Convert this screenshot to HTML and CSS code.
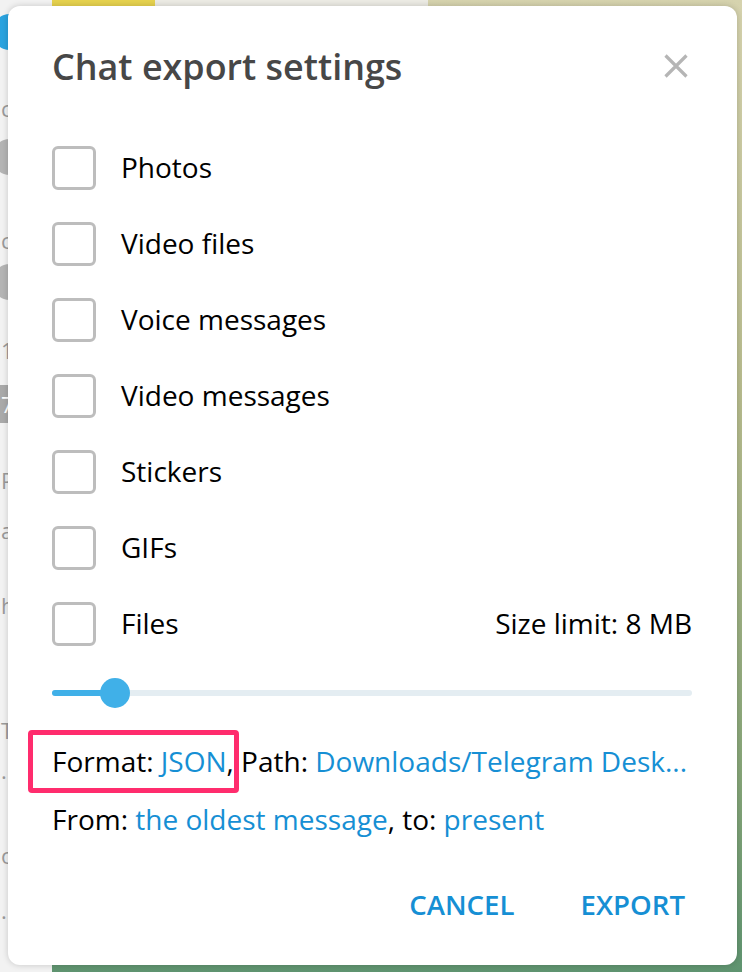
FILE: index.html
```html
<!DOCTYPE html>
<html>
<head>
<meta charset="utf-8">
<link rel="stylesheet" href="styles.css">
</head>
<body>
<div class="app">
  <aside class="sidebar">
    <span class="avatar blue"></span>
    <span class="frag">c</span>
    <span class="avatar grey"></span>
    <span class="frag">c</span>
    <span class="avatar grey"></span>
    <span class="frag">1</span>
    <span class="badge">7</span>
    <span class="frag">P</span>
    <span class="frag">a</span>
    <span class="frag">h</span>
    <span class="frag">Tu</span>
    <span class="frag">.</span>
    <span class="frag">o</span>
    <span class="frag">.</span>
  </aside>
  <main class="chat"></main>
</div>

<div class="dialog">
  <div class="dialog-header">
    <h1 class="title">Chat export settings</h1>
    <button class="close" aria-label="Close">
      <svg width="24" height="24" viewBox="0 0 24 24"><path d="M1.5 1.5 L22.5 22.5 M22.5 1.5 L1.5 22.5" stroke="#b5b5b5" stroke-width="3.2" fill="none"/></svg>
    </button>
  </div>

  <ul class="options">
    <li class="option"><span class="checkbox"></span><span class="label">Photos</span></li>
    <li class="option"><span class="checkbox"></span><span class="label">Video files</span></li>
    <li class="option"><span class="checkbox"></span><span class="label">Voice messages</span></li>
    <li class="option"><span class="checkbox"></span><span class="label">Video messages</span></li>
    <li class="option"><span class="checkbox"></span><span class="label">Stickers</span></li>
    <li class="option"><span class="checkbox"></span><span class="label">GIFs</span></li>
    <li class="option"><span class="checkbox"></span><span class="label">Files</span><span class="size-limit">Size limit: 8 MB</span></li>
  </ul>

  <div class="slider">
    <div class="track"><div class="fill" style="width: 63px"></div></div>
    <div class="knob" style="left: 48px"></div>
  </div>

  <p class="info format-line">Format: <a class="link">JSON</a>, Path: <a class="link">Downloads/Telegram Desk...</a><span class="highlight"></span></p>
  <p class="info from-line">From: <a class="link">the oldest message</a>, to: <a class="link">present</a></p>

  <div class="actions">
    <button class="btn">CANCEL</button>
    <button class="btn">EXPORT</button>
  </div>
</div>
</body>
</html>
```

FILE: styles.css
```css
* { box-sizing: border-box; }
html, body { margin: 0; padding: 0; }
body {
  width: 742px;
  height: 972px;
  overflow: hidden;
  position: relative;
  font-family: "Open Sans", "Noto Sans", sans-serif;
}

.app {
  display: flex;
  height: 972px;
}
.sidebar {
  width: 52px;
  background: #f2f2f2;
  display: flex;
  flex-direction: column;
  align-items: flex-start;
  overflow: hidden;
}
.avatar {
  display: block;
  width: 36px;
  height: 36px;
  border-radius: 50%;
  margin-left: -8px;
  flex: none;
}
.avatar.blue { background: #2aa3df; }
.avatar.grey { background: #b4b4b4; }
.frag {
  display: block;
  height: 30px;
  line-height: 30px;
  font-size: 22px;
  color: #9a9a9a;
  margin-left: 1px;
  flex: none;
}
.badge {
  display: block;
  width: 30px;
  height: 38px;
  line-height: 38px;
  background: #a9a9a9;
  color: #fff;
  font-size: 22px;
  padding-left: 1px;
  flex: none;
}
.sidebar > :nth-child(1) { margin-top: 14px; }
.sidebar > :nth-child(2) { margin-top: 43px; }
.sidebar > :nth-child(3) { margin-top: 16px; }
.sidebar > :nth-child(4) { margin-top: 50px; }
.sidebar > :nth-child(5) { margin-top: 9px; }
.sidebar > :nth-child(6) { margin-top: 35px; }
.sidebar > :nth-child(7) { margin-top: 20px; }
.sidebar > :nth-child(8) { margin-top: 42px; }
.sidebar > :nth-child(9) { margin-top: 20px; }
.sidebar > :nth-child(10) { margin-top: 45px; }
.sidebar > :nth-child(11) { margin-top: 95px; }
.sidebar > :nth-child(12) { margin-top: 10px; }
.sidebar > :nth-child(13) { margin-top: 55px; }
.sidebar > :nth-child(14) { margin-top: 25px; }

.chat {
  flex: 1;
  background:
    linear-gradient(to right, #e6d24e 0 103px, #ecebe4 103px 376px, transparent 376px) top left / 100% 14px no-repeat,
    linear-gradient(to bottom, #d6d3ae 0%, #b8bc8e 40%, #86a578 80%, #5f9470 100%);
}

.dialog {
  position: absolute;
  left: 8px;
  top: 6px;
  width: 729px;
  height: 959px;
  background: #fff;
  border-radius: 12px;
  box-shadow: 0 0 6px rgba(0, 0, 0, 0.18);
  padding: 0 45px 0 44px;
}

.dialog-header {
  margin-top: 32px;
  height: 56px;
  display: flex;
  align-items: center;
  justify-content: space-between;
}
.title {
  margin: 0;
  font-size: 35.9px;
  font-weight: 600;
  color: #474747;
}
.close {
  border: 0;
  background: none;
  padding: 0;
  margin-right: 4px;
  width: 24px;
  height: 24px;
  display: flex;
}

.options {
  list-style: none;
  margin: 52px 0 0;
  padding: 0;
  display: flex;
  flex-direction: column;
  gap: 32px;
}
.option {
  height: 44px;
  display: flex;
  align-items: center;
}
.checkbox {
  width: 44px;
  height: 44px;
  border: 3px solid #bdbdbd;
  border-radius: 6px;
  flex: none;
}
.label {
  margin-left: 25px;
  font-size: 28px;
  line-height: 40px;
  margin-top: -2px;
  color: #000;
}
.size-limit {
  margin-left: auto;
  font-size: 28px;
  line-height: 40px;
  margin-top: -2px;
  color: #000;
}

.slider {
  position: relative;
  margin-top: 32px;
  height: 30px;
  display: flex;
  align-items: center;
}
.track {
  width: 100%;
  height: 6px;
  border-radius: 3px;
  background: #e4edf2;
  overflow: hidden;
}
.fill {
  height: 100%;
  background: #40b0e8;
}
.knob {
  position: absolute;
  top: 0;
  width: 30px;
  height: 30px;
  border-radius: 50%;
  background: #40b0e8;
}

.info {
  margin: 0;
  font-size: 28px;
  line-height: 36px;
  color: #000;
  white-space: nowrap;
}
.format-line {
  margin-top: 35px;
  position: relative;
}
.from-line {
  margin-top: 22px;
}
.link {
  color: #168fd4;
  text-decoration: none;
}
.highlight {
  position: absolute;
  left: -24px;
  top: -13px;
  width: 211px;
  height: 63px;
  border: 5px solid #ff2c6d;
  border-radius: 4px;
}

.actions {
  margin-top: 49px;
  display: flex;
  justify-content: flex-end;
  gap: 52px;
}
.btn {
  border: 0;
  background: none;
  padding: 0 7px;
  font-family: "Open Sans", "Noto Sans", sans-serif;
  font-size: 27.6px;
  font-weight: 600;
  line-height: 36px;
  color: #168fd4;
}
```
